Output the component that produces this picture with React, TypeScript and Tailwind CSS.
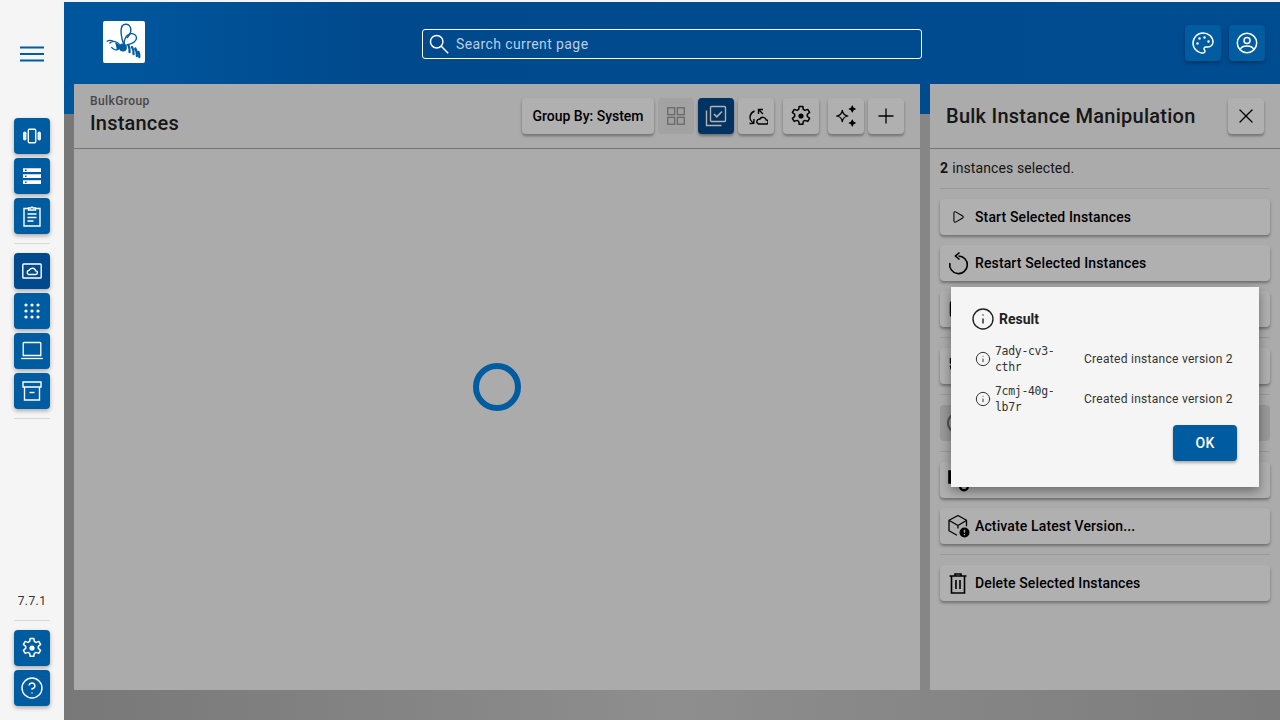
import React from "react";
import { Palette, CircleHelp, Plus, X, Info, Play, Square, RotateCcw, CirclePause } from "lucide-react";

const Gear = ({ className = "w-6 h-6" }: { className?: string }) => (
  <svg viewBox="0 0 24 24" className={className} fill="none" stroke="currentColor" strokeWidth="1.500" strokeLinejoin="round">
    <path d="M10.200 2.500h3.600l.5 2.900 1.700 1 2.800-1 1.800 3.100-2.300 1.900v2l2.300 1.900-1.800 3.100-2.800-1-1.700 1-.5 2.900h-3.600l-.5-2.900-1.700-1-2.800 1-1.800-3.100 2.300-1.900v-2L3.400 8.500l1.800-3.100 2.800 1 1.700-1z" />
    <circle cx="12" cy="12" r="2.600" fill="currentColor" stroke="none" />
  </svg>
);

const SearchGlass = () => (
  <svg viewBox="0 0 24 24" className="w-[22px] h-[22px]" fill="none" stroke="currentColor" strokeWidth="1.600">
    <circle cx="9.500" cy="9.500" r="6.800" />
    <path d="M14.500 14.500L22 22" />
  </svg>
);

const Vibration = () => (
  <svg viewBox="0 0 24 24" className="w-6 h-6" fill="none" stroke="currentColor" strokeWidth="1.400">
    <rect x="8.300" y="5.300" width="7.400" height="13.400" rx="1" />
    <rect x="3" y="7.500" width="3.500" height="9" rx="1.700" fill="currentColor" stroke="none" opacity="0.9" />
    <rect x="17.500" y="7.500" width="3.500" height="9" rx="1.700" fill="currentColor" stroke="none" opacity="0.9" />
  </svg>
);

const Storage = () => (
  <svg viewBox="0 0 24 24" className="w-6 h-6" fill="currentColor">
    <path fillRule="evenodd" d="M3 4.300h18V8H3zM5 5.400v1.500h1.500V5.400zM3 10.300h18V14H3zM5 11.400v1.500h1.500v-1.500zM3 16.300h18V20H3zM5 17.400v1.500h1.500v-1.500z" />
  </svg>
);

const Clipboard = () => (
  <svg viewBox="0 0 24 24" className="w-6 h-6" fill="none" stroke="currentColor" strokeWidth="1.400">
    <path d="M8.500 4.500H4v17.500h16V4.500h-4.500" />
    <path d="M8.500 6V4h2.300a1.300 1.300 0 0 1 2.400 0h2.300v2z" />
    <path d="M7.500 10h9M7.500 13.500h9M7.500 17h6" strokeWidth="1.500" />
  </svg>
);

const CloudBox = () => (
  <svg viewBox="0 0 24 24" className="w-6 h-6" fill="none" stroke="currentColor" strokeWidth="1.400">
    <rect x="2.800" y="5" width="18.400" height="14" rx="0.800" />
    <path d="M8.500 15.500h7a1.800 1.800 0 0 0 .2-3.600 3.500 3.500 0 0 0-6.600-.6 2.200 2.200 0 0 0-.6 4.200z" />
  </svg>
);

const Dots = () => (
  <svg viewBox="0 0 24 24" className="w-6 h-6" fill="currentColor">
    {[6, 12, 18].flatMap((y) =>
      [6, 12, 18].map((x) => <circle key={`${x}-${y}`} cx={x} cy={y} r="1.600" />)
    )}
  </svg>
);

const Laptop = () => (
  <svg viewBox="0 0 24 24" className="w-6 h-6" fill="none" stroke="currentColor" strokeWidth="1.300">
    <path d="M4 3.500h16a.8.800 0 0 1 .8.8v12.200H3.200V4.300a.8.800 0 0 1 .8-.8z" />
    <path d="M1.200 19.500h21.600" />
  </svg>
);

const Archive = () => (
  <svg viewBox="0 0 24 24" className="w-6 h-6" fill="none" stroke="currentColor" strokeWidth="1.400">
    <path d="M3 3h18v5H3zM4.500 8v13h15V8" />
    <path d="M9.500 13.500h5" />
  </svg>
);

const Profile = () => (
  <svg viewBox="0 0 24 24" className="w-6 h-6" fill="none" stroke="currentColor" strokeWidth="1.500">
    <circle cx="12" cy="12" r="9.700" />
    <circle cx="12" cy="9.500" r="3" />
    <path d="M5.500 18c1-2.500 3.500-3 6.500-3s5.500.5 6.500 3" />
  </svg>
);

const Grid = () => (
  <svg viewBox="0 0 24 24" className="w-[22px] h-[22px]" fill="none" stroke="currentColor" strokeWidth="1.500">
    <rect x="3" y="3" width="7.500" height="7.500" />
    <rect x="13.500" y="3" width="7.500" height="7.500" />
    <rect x="3" y="13.500" width="7.500" height="7.500" />
    <rect x="13.500" y="13.500" width="7.500" height="7.500" />
  </svg>
);

const Selected = () => (
  <svg viewBox="0 0 24 24" className="w-6 h-6" fill="none" stroke="currentColor" strokeWidth="1.400">
    <rect x="6.500" y="2.500" width="15" height="15" rx="1" />
    <path d="M2.500 6.500V21.500H17.500" />
    <path d="M10 10l2.800 2.800L18 7.500" strokeWidth="1.600" />
  </svg>
);

const SwapCloud = () => (
  <svg viewBox="0 0 24 24" className="w-6 h-6" fill="none" stroke="currentColor" strokeWidth="1.400">
    <path d="M10.500 7C6 9 3.500 15 9.500 19" />
    <path d="M5.500 19.500l4.300-.2.200-4.300" />
    <path d="M19 10l-4.500-4.500M14.500 10V5.500H19" />
    <path d="M14.500 20h7.500a2 2 0 0 0 .3-4 3.500 3.500 0 0 0-6.500-.8 2.500 2.500 0 0 0-1.300 4.800z" />
  </svg>
);

const Sparkles = () => (
  <svg viewBox="0 0 24 24" className="w-6 h-6" fill="none" stroke="currentColor" strokeWidth="1.200" strokeLinejoin="round">
    <path d="M8.300 6.300Q9 11.300 14 12 9 12.700 8.300 17.700 7.600 12.700 2.600 12 7.600 11.300 8.300 6.300z" />
    <path d="M18.300 2Q18.700 4.600 21.300 5 18.700 5.400 18.300 8 17.900 5.400 15.300 5 17.900 4.600 18.300 2z" fill="currentColor" />
    <path d="M18.300 16Q18.700 18.600 21.300 19 18.700 19.400 18.300 22 17.900 19.400 15.300 19 17.900 18.600 18.300 16z" fill="currentColor" />
  </svg>
);

const Restart = () => (
  <svg viewBox="0 0 24 24" className="w-6 h-6" fill="none" stroke="currentColor" strokeWidth="1.600">
    <path d="M12.500 5a8.800 8.800 0 1 1-8.600 7" />
    <path d="M13.500 1.500L9.500 5l4 3.500" />
  </svg>
);

const CubeAlert = () => (
  <svg viewBox="0 0 24 24" className="w-6 h-6" fill="none" stroke="currentColor" strokeWidth="1.300" strokeLinejoin="round">
    <path d="M12 1.500l8.500 4.800v6M12 1.500L3 6.300v10.400l8 4.500" />
    <path d="M3.300 6.500l8.700 5 8.300-5M12 11.500v3" />
    <circle cx="18.500" cy="18.500" r="5" fill="currentColor" stroke="none" />
    <path d="M18.500 15.800v3M18.500 20v1.200" stroke="#f5f5f5" strokeWidth="1.400" />
  </svg>
);

const Trash = () => (
  <svg viewBox="0 0 24 24" className="w-6 h-6" fill="none" stroke="currentColor" strokeWidth="1.600">
    <path d="M3.500 5h17M9 5V3h6v2M5.500 5v17h13V5" />
    <path d="M10 9v9M14 9v9" />
  </svg>
);

const GearBadge = () => (
  <svg viewBox="0 0 24 24" className="w-6 h-6" fill="none" stroke="currentColor" strokeWidth="1.600">
    <path d="M3 3h3v12H3z" fill="currentColor" />
    <circle cx="18" cy="18.500" r="3.800" strokeWidth="2.400" />
  </svg>
);

const Bee = () => (
  <svg viewBox="0 0 42 42" className="w-[42px] h-[42px]" fill="none" stroke="#005ca1">
    {/* wings */}
    <path d="M21 24C18 17 17 8 19.500 4.500 21.500 2.500 25.500 2.800 27 5.500 29 9 27.500 13 24 17" strokeWidth="1.400" />
    <path d="M21 24C21 19 23 14 27 12.800 30.500 12 33.500 14 33.500 17 33.500 20.500 28 23 23.500 24" strokeWidth="1.400" />
    {/* head and antenna */}
    <path d="M3.700 20.500C5.500 19.200 8 19 10 20" strokeWidth="1.200" />
    <path d="M6.500 22.500C8 20.500 11 20 13 21 15.500 22 17 24 16.800 26 16.500 28 14.500 29.200 12.500 28.800 10.500 28.500 9 27.500 8.300 26" strokeWidth="1.300" />
    <path d="M12 21.500C13 24 13.500 26.500 13.800 28.800 15.800 28.700 17 27.500 16.800 25.800 16.500 23.800 14.500 22 12 21.500z" fill="#005ca1" stroke="none" />
    {/* body */}
    <circle cx="20" cy="26.500" r="3.900" fill="#005ca1" stroke="none" />
    <path d="M25.500 24.500c1 2 1.300 4 1 6.500M29 26c1.200 2 1.800 4.500 1.500 7M32.300 27.500c1.300 2 1.800 4.500 1.600 7.500M35.500 31c.8 1.500 1 3 .8 5" strokeWidth="2.300" strokeLinecap="round" />
  </svg>
);

const Hamburger = () => (
  <svg viewBox="0 0 24 16" className="w-6 h-4 shrink-0" stroke="#005ca1" strokeWidth="2">
    <path d="M0 1.500h24M0 8h24M0 14.500h24" />
  </svg>
);

function NavButton({ children, active }: { children: React.ReactNode; active?: boolean }) {
  return (
    <button className={`w-9 h-9 rounded-[4px] flex items-center justify-center text-white shadow-[0_2px_4px_rgba(0,0,0,0.3)] ${active ? "bg-[#00498d]" : "bg-[#005ca1]"}`}>
      {children}
    </button>
  );
}

function ToolButton({ children, className = "" }: { children: React.ReactNode; className?: string }) {
  return (
    <button className={`w-9 h-9 rounded-[4px] flex items-center justify-center bg-[#fcfcfc] text-black shadow-[0_2px_3px_rgba(0,0,0,0.35)] ${className}`}>
      {children}
    </button>
  );
}

// rows hidden behind the dialog in the picture carry no label
function ActionRow({ icon, label, disabled }: { icon: React.ReactNode; label?: string; disabled?: boolean }) {
  return (
    <button className={`w-full h-9 rounded-[4px] flex items-center gap-[5px] pl-[6px] text-[14px] font-medium tracking-[0.13px] ${disabled ? "bg-[#dcdcdc] text-[#777]" : "bg-[#fcfcfc] text-black shadow-[0_2px_3px_rgba(0,0,0,0.35)]"}`}>
      <span className="w-6 h-6 flex items-center justify-center shrink-0">{icon}</span>
      {label && <span>{label}</span>}
    </button>
  );
}

function ResultRow({ id }: { id: string }) {
  return (
    <div className="flex items-center h-10">
      <Info className="w-4 h-4 ml-[2px] text-[#333] shrink-0" strokeWidth={1.5} />
      <div className="w-[70px] ml-[4px] mr-[19px] font-['DejaVu_Sans_Mono',monospace] text-[11.5px] tracking-[-0.32px] leading-4 text-[#333] shrink-0">{id}</div>
      <div className="text-[12px] text-[#333] tracking-[0.28px] whitespace-nowrap">Created instance version 2</div>
    </div>
  );
}

export default function App() {
  return (
    <div className="flex h-screen w-full overflow-hidden bg-[#f5f5f5] font-['Roboto',sans-serif] pt-[2px]">
      {/* Sidebar */}
      <nav className="w-16 shrink-0 flex flex-col items-center pt-[44px] pb-[14px]">
        <Hamburger />
        <div className="mt-[56px] flex flex-col gap-1">
          <NavButton><Vibration /></NavButton>
          <NavButton><Storage /></NavButton>
          <NavButton><Clipboard /></NavButton>
        </div>
        <div className="w-9 h-px shrink-0 bg-[#d8d8d8] my-[9px]" />
        <div className="flex flex-col gap-1">
          <NavButton active><CloudBox /></NavButton>
          <NavButton><Dots /></NavButton>
          <NavButton><Laptop /></NavButton>
          <NavButton><Archive /></NavButton>
        </div>
        <div className="w-9 h-px shrink-0 bg-[#d8d8d8] mt-[9px]" />
        <div className="mt-auto text-[12px] leading-4 text-[#333] tracking-[0.4px]">7.7.1</div>
        <div className="w-9 h-px shrink-0 bg-[#d8d8d8] mt-[11px] mb-[9px]" />
        <div className="flex flex-col gap-1">
          <NavButton><Gear /></NavButton>
          <NavButton><CircleHelp className="w-6 h-6" strokeWidth={1.4} /></NavButton>
        </div>
      </nav>

      <div className="flex-1 min-w-0 flex flex-col bg-gradient-to-r from-[#787878] via-[#8e8e8e] to-[#7c7c7c]">
        {/* Header */}
        <header className="h-[112px] shrink-0 flex items-start bg-gradient-to-r from-[#00569c] from-[5%] via-[#00498d] via-[25%] to-[#004c90]">
          <div className="w-full h-[82px] flex items-center">
            <div className="ml-[39px] -mt-[2px] w-[42px] h-[42px] rounded-[2px] bg-white shrink-0">
              <Bee />
            </div>
            <div className="ml-[277px] mt-[2px] w-[500px] h-[30px] rounded-[3px] border border-white flex items-center pl-[5px] gap-[6px] text-white">
              <SearchGlass />
              <span className="text-[14px] text-[#b9cfe3] tracking-[0.4px]">Search current page</span>
            </div>
            <div className="ml-auto mr-[15px] flex gap-2">
              <NavButton><Palette className="w-6 h-6" strokeWidth={1.5} /></NavButton>
              <NavButton><Profile /></NavButton>
            </div>
          </div>
        </header>

        <main className="-mt-[30px] h-[606px] shrink-0 flex gap-[10px] pl-[10px]">
          {/* Instances panel */}
          <section className="relative flex-1 min-w-0 bg-[#f5f5f5]">
            <div className="h-[65px] border-b border-[#aaa] flex items-start pl-4 pr-4 pt-[14px]">
              <div className="-mt-[5px]">
                <div className="text-[12px] leading-[16px] font-medium text-[#666] tracking-[0.4px]">BulkGroup</div>
                <div className="text-[20px] leading-[28px] font-medium text-[#222] tracking-[0.2px]">Instances</div>
              </div>
              <div className="ml-auto flex items-center">
                <button className="h-9 w-[132px] rounded-[4px] bg-[#fcfcfc] text-[14px] font-medium text-black shadow-[0_2px_3px_rgba(0,0,0,0.35)]">Group By: System</button>
                <div className="w-9 h-9 ml-1 rounded-[4px] bg-[#e8e8e8] text-[#999] flex items-center justify-center"><Grid /></div>
                <button className="w-9 h-9 ml-1 rounded-[4px] bg-[#00498d] text-white flex items-center justify-center shadow-[0_2px_3px_rgba(0,0,0,0.35)]"><Selected /></button>
                <ToolButton className="ml-1"><SwapCloud /></ToolButton>
                <ToolButton className="ml-[9px]"><Gear /></ToolButton>
                <ToolButton className="ml-[9px]"><Sparkles /></ToolButton>
                <ToolButton className="ml-1"><Plus className="w-6 h-6" strokeWidth={1.3} /></ToolButton>
              </div>
            </div>
            <div className="absolute inset-0 bg-black/30 flex items-center justify-center">
              <div className="w-12 h-12 rounded-full border-[6px] border-[#005ca1]" />
            </div>
          </section>

          {/* Bulk manipulation panel */}
          <aside className="relative w-[350px] shrink-0 bg-[#f5f5f5]">
            <div className="h-[65px] border-b border-[#aaa] flex items-center pl-4 pr-4 pb-[1px]">
              <h2 className="text-[20px] font-medium text-[#222] tracking-[0.25px]">Bulk Instance Manipulation</h2>
              <ToolButton className="ml-auto"><X className="w-6 h-6" strokeWidth={1.3} /></ToolButton>
            </div>
            <div className="px-[10px]">
              <p className="h-[40px] flex items-center text-[14px] text-[#222] tracking-[0.1px] border-b border-[#ddd]">
                <b className="font-bold mr-1">2</b> instances selected.
              </p>
              <div className="mt-[10px] flex flex-col gap-[10px]">
                <ActionRow icon={<Play className="w-[14px] h-[14px]" strokeWidth={1.8} />} label="Start Selected Instances" />
                <ActionRow icon={<Restart />} label="Restart Selected Instances" />
                <ActionRow icon={<Square className="w-5 h-5" strokeWidth={1.8} />} />
              </div>
              <div className="h-px bg-[#ddd] mt-[10px]" />
              <div className="mt-[10px]"><ActionRow icon={<RotateCcw className="w-5 h-5" strokeWidth={1.8} />} /></div>
              <div className="h-px bg-[#ddd] mt-[10px]" />
              <div className="mt-[10px]"><ActionRow disabled icon={<CirclePause className="w-6 h-6" strokeWidth={2} />} /></div>
              <div className="h-px bg-[#ddd] mt-[10px]" />
              <div className="mt-[10px] flex flex-col gap-[10px]">
                <ActionRow icon={<GearBadge />} />
                <ActionRow icon={<CubeAlert />} label="Activate Latest Version..." />
              </div>
              <div className="h-px bg-[#ddd] mt-[10px]" />
              <div className="mt-[10px]"><ActionRow icon={<Trash />} label="Delete Selected Instances" /></div>
            </div>

            {/* Result dialog */}
            <div className="absolute inset-0 bg-black/30 flex items-center justify-center">
              <div className="w-[308px] h-[200px] bg-[#f5f5f5] shadow-[0_4px_10px_rgba(0,0,0,0.4)] pt-5 px-[22px]">
                <div className="flex items-center gap-1 h-6 -ml-[2px]">
                  <Info className="w-6 h-6 text-[#222]" strokeWidth={1.4} />
                  <span className="text-[14px] font-bold text-[#222]">Result</span>
                </div>
                <div className="mt-[8px]">
                  <ResultRow id="7ady-cv3-cthr" />
                  <ResultRow id="7cmj-40g-lb7r" />
                </div>
                <div className="flex justify-end mt-[6px]">
                  <button className="w-16 h-9 rounded-[4px] bg-[#005ca1] text-white text-[14px] font-medium tracking-[0.3px] shadow-[0_2px_3px_rgba(0,0,0,0.3)]">OK</button>
                </div>
              </div>
            </div>
          </aside>
        </main>
      </div>
    </div>
  );
}
